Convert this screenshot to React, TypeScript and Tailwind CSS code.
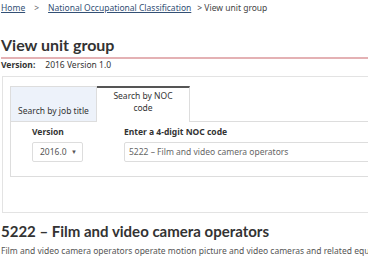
import React from 'react';

const Breadcrumb: React.FC = () => (
  <nav className="flex items-center text-[8.5px] leading-[12px] text-[#333] pt-[2px]">
    <a className="text-[#335075] underline">Home</a>
    <span className="mx-[9px] text-[#666]">&gt;</span>
    <a className="text-[#335075] underline">National Occupational Classification</a>
    <span className="ml-[6px] text-[#444]">&gt; View unit group</span>
  </nav>
);

const SearchPanel: React.FC = () => (
  <div className="ml-[1px] mt-[6px] h-[137px] border border-[#e3e3e3] pt-[9px] pl-[7px]">
    {/* tabs */}
    <div className="flex items-end">
      <div className="flex h-[36px] w-[87px] items-end justify-center border border-[#dddddd] bg-[#edf2fa] pb-[3px] text-[8.5px] text-[#333]">
        Search by job title
      </div>
      <div className="flex h-[36px] w-[93px] flex-col items-center border-t-[2px] border-r border-t-[#555] border-r-[#dddddd] bg-white pt-[2px] text-center text-[8.5px] leading-[12px] text-[#333]">
        <span>Search by NOC</span>
        <span>code</span>
      </div>
      <div className="flex-1 border-b border-[#dddddd]" />
    </div>
    {/* tab content */}
    <div className="flex h-[55px] gap-[41px] border-b border-l border-[#dddddd] pl-[21px] pt-[4px]">
      <div className="flex flex-col">
        <label className="text-[8.5px] font-bold leading-[12px] text-[#333]">Version</label>
        <div className="mt-[4px] flex h-[20px] w-[51px] items-center justify-between rounded-[2px] border border-[#dddddd] pl-[7px] pr-[5px] text-[8.5px] text-[#555]">
          <span>2016.0</span>
          <span className="text-[6px]">▼</span>
        </div>
      </div>
      <div className="flex flex-1 flex-col">
        <label className="text-[8.5px] font-bold leading-[12px] text-[#333]">Enter a 4-digit NOC code</label>
        <div className="mt-[4px] flex h-[20px] items-center rounded-[2px] border border-[#dddddd] pl-[4px] text-[8.5px] text-[#666]">
          5222 – Film and video camera operators
        </div>
      </div>
    </div>
  </div>
);

export default function App() {
  return (
    <div className="h-[259px] w-[368px] overflow-hidden bg-white" style={{ fontFamily: '"Noto Sans", "Open Sans", sans-serif' }}>
      <div className="w-[640px] pl-[1px]">
        <Breadcrumb />
        <h1 className="mt-[21px] text-[16px] font-bold leading-[20px] text-[#333]" style={{ fontFamily: 'Lato, sans-serif' }}>
          View unit group
        </h1>
        <div className="mt-[2px] h-[2px] bg-[#e4b1b4]" />
        <div className="mt-[1px] flex text-[8.5px] leading-[10px] text-[#333]">
          <span className="font-bold">Version:</span>
          <span className="ml-[10px]">2016 Version 1.0</span>
        </div>
        <SearchPanel />
        <h2 className="mt-[8px] text-[15px] font-bold leading-[20px] text-[#333]" style={{ fontFamily: 'Lato, sans-serif' }}>
          5222 – Film and video camera operators
        </h2>
        <p className="mt-[4px] whitespace-nowrap text-[8.5px] leading-[12px] text-[#555]">
          Film and video camera operators operate motion picture and video cameras and related equipment to record news, live events, films, videos and television broadcasts.
        </p>
      </div>
    </div>
  );
}
